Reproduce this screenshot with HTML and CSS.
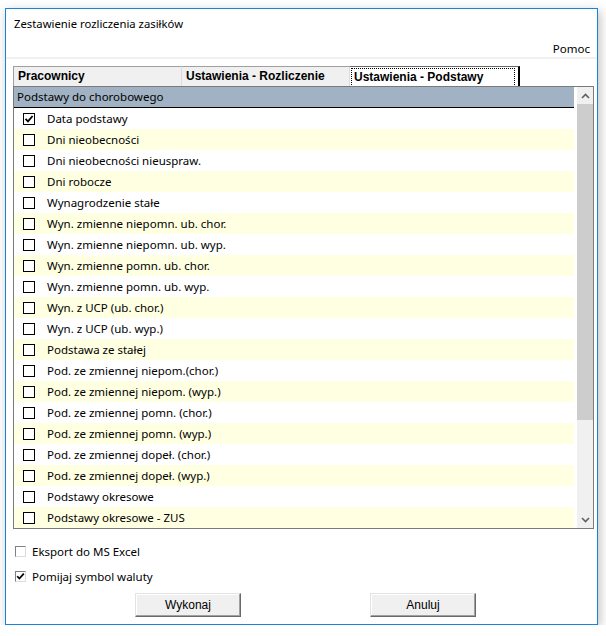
FILE: index.html
```html
<!DOCTYPE html>
<html lang="pl">
<head>
    <meta charset="UTF-8">
    <title>Zestawienie rozliczenia zasiłków</title>
    <link rel="stylesheet" href="styles.css">
</head>
<body>
    <div class="window">
        <div class="title">Zestawienie rozliczenia zasiłków</div>
        <div class="menu"><span>Pomoc</span></div>
        <div class="band"></div>

        <div class="content">
            <div class="tabs">
                <div class="tab">Pracownicy</div>
                <div class="tab">Ustawienia - Rozliczenie</div>
                <div class="tab active"><span class="focus">Ustawienia - Podstawy</span></div>
            </div>

            <div class="panel">
                <div class="list">
                    <div class="group">Podstawy do chorobowego</div>
                    <div id="rows"></div>
                </div>
                <div class="scrollbar">
                    <div class="arrow">
                        <svg width="9" height="6" viewBox="0 0 9 6"><path d="M1 5 L4.5 1.5 L8 5" fill="none" stroke="#606060" stroke-width="1.6"/></svg>
                    </div>
                    <div class="thumb"></div>
                    <div class="track"></div>
                    <div class="arrow">
                        <svg width="9" height="6" viewBox="0 0 9 6"><path d="M1 1 L4.5 4.5 L8 1" fill="none" stroke="#606060" stroke-width="1.6"/></svg>
                    </div>
                </div>
            </div>

            <div class="options">
                <label class="option">
                    <span class="box3d"></span>
                    Eksport do MS Excel
                </label>
                <label class="option">
                    <span class="box3d">
                        <svg width="9" height="9" viewBox="0 0 9 9"><path d="M1.2 4.2 L3.4 6.6 L7.8 1.6" fill="none" stroke="#000" stroke-width="1.7"/></svg>
                    </span>
                    Pomijaj symbol waluty
                </label>
            </div>

            <div class="buttons">
                <button class="btn">Wykonaj</button>
                <button class="btn">Anuluj</button>
            </div>
        </div>
    </div>

    <script>
        const pozycje = [
            ['Data podstawy', true],
            ['Dni nieobecności', false],
            ['Dni nieobecności nieuspraw.', false],
            ['Dni robocze', false],
            ['Wynagrodzenie stałe', false],
            ['Wyn. zmienne niepomn. ub. chor.', false],
            ['Wyn. zmienne niepomn. ub. wyp.', false],
            ['Wyn. zmienne pomn. ub. chor.', false],
            ['Wyn. zmienne pomn. ub. wyp.', false],
            ['Wyn. z UCP (ub. chor.)', false],
            ['Wyn. z UCP (ub. wyp.)', false],
            ['Podstawa ze stałej', false],
            ['Pod. ze zmiennej niepom.(chor.)', false],
            ['Pod. ze zmiennej niepom. (wyp.)', false],
            ['Pod. ze zmiennej pomn. (chor.)', false],
            ['Pod. ze zmiennej pomn. (wyp.)', false],
            ['Pod. ze zmiennej dopeł. (chor.)', false],
            ['Pod. ze zmiennej dopeł. (wyp.)', false],
            ['Podstawy okresowe', false],
            ['Podstawy okresowe - ZUS', false]
        ];

        const check = '<svg width="10" height="10" viewBox="0 0 10 10"><path d="M1.5 4.8 L4 7.4 L8.6 2" fill="none" stroke="#000" stroke-width="1.8"/></svg>';

        const rows = document.getElementById('rows');
        pozycje.forEach(function(p, i) {
            const row = document.createElement('div');
            row.className = 'row' + (i % 2 ? ' odd' : '');
            row.innerHTML = '<span class="box">' + (p[1] ? check : '') + '</span><span class="label">' + p[0] + '</span>';
            rows.appendChild(row);
        });
    </script>
</body>
</html>
```

FILE: styles.css
```css
* {
    margin: 0;
    padding: 0;
    box-sizing: border-box;
}

body {
    background: #fff;
    font-family: 'Noto Sans', 'Open Sans', sans-serif;
    font-size: 11.5px;
    color: #000;
}

.window {
    margin: 8px 0 0 5px;
    width: 593px;
    height: 617px;
    border: 1px solid #1883d7;
    background: #fff;
    box-shadow: 2px 3px 10px rgba(0,0,0,0.25);
}

.title {
    padding: 6px 0 0 8px;
    height: 32px;
    line-height: 17px;
    font-size: 11.3px;
}

.menu {
    display: flex;
    justify-content: flex-end;
    padding-right: 7px;
    height: 16px;
    line-height: 16px;
}

.band {
    height: 2px;
    background: #f0f0f0;
}

.content {
    padding: 7px 4px 0 7px;
}

.tabs {
    display: flex;
    height: 20px;
}

.tab {
    width: 168px;
    height: 20px;
    padding-left: 4px;
    background: #f0f0f0;
    border-top: 1px solid #a0a0a0;
    border-left: 1px solid #dcdcdc;
    font-family: 'Liberation Sans', Arial, sans-serif;
    font-weight: bold;
    font-size: 12px;
    line-height: 19px;
}

.tab:first-child {
    border-left: 1px solid #a0a0a0;
}

.tab.active {
    width: 171px;
    padding: 1px 3px 0 1px;
    background: #fff;
    border-top: 1px solid #696969;
    border-right: 2px solid #000;
}

.focus {
    display: block;
    height: 17px;
    padding-left: 2px;
    border: 1px dotted #000;
    border-bottom: none;
    line-height: 16px;
}

.panel {
    display: flex;
    gap: 3px;
    width: 581px;
    height: 443px;
    border: 1px solid #7a7a7a;
}

.list {
    width: 560px;
}

.group {
    height: 21px;
    padding-left: 3px;
    background: #a0b2c3;
    border-bottom: 1px solid #000;
    line-height: 20px;
}

.row {
    display: flex;
    align-items: center;
    height: 21px;
    background: #fff;
}

.row.odd {
    background: #ffffe1;
}

.box {
    display: flex;
    align-items: center;
    justify-content: center;
    width: 12px;
    height: 12px;
    margin: 0 12px 0 9px;
    border: 1px solid #000;
    background: #fff;
}

.scrollbar {
    display: flex;
    flex-direction: column;
    width: 16px;
    background: #f0f0f0;
}

.arrow {
    height: 17px;
    display: flex;
    align-items: center;
    justify-content: center;
}

.thumb {
    height: 316px;
    background: #cdcdcd;
}

.track {
    flex: 1;
}

.options {
    margin-top: 15px;
    padding-left: 2px;
}

.option {
    display: flex;
    align-items: center;
    gap: 6px;
    height: 14px;
}

.option + .option {
    margin-top: 11px;
}

.box3d {
    display: flex;
    align-items: center;
    justify-content: center;
    width: 11px;
    height: 11px;
    border-top: 1px solid #808080;
    border-left: 1px solid #808080;
    border-right: 1px solid #dcdcdc;
    border-bottom: 1px solid #dcdcdc;
    background: #fff;
}

.buttons {
    display: flex;
    gap: 129px;
    margin: 10px 0 0 122px;
}

.btn {
    width: 106px;
    height: 24px;
    background: #f0f0f0;
    border: 1px solid;
    border-color: #e3e3e3 #696969 #696969 #e3e3e3;
    box-shadow: inset -1px -1px 0 #a0a0a0, inset 1px 1px 0 #fff;
    font-family: 'Liberation Sans', Arial, sans-serif;
    font-size: 12px;
    color: #000;
}
```
